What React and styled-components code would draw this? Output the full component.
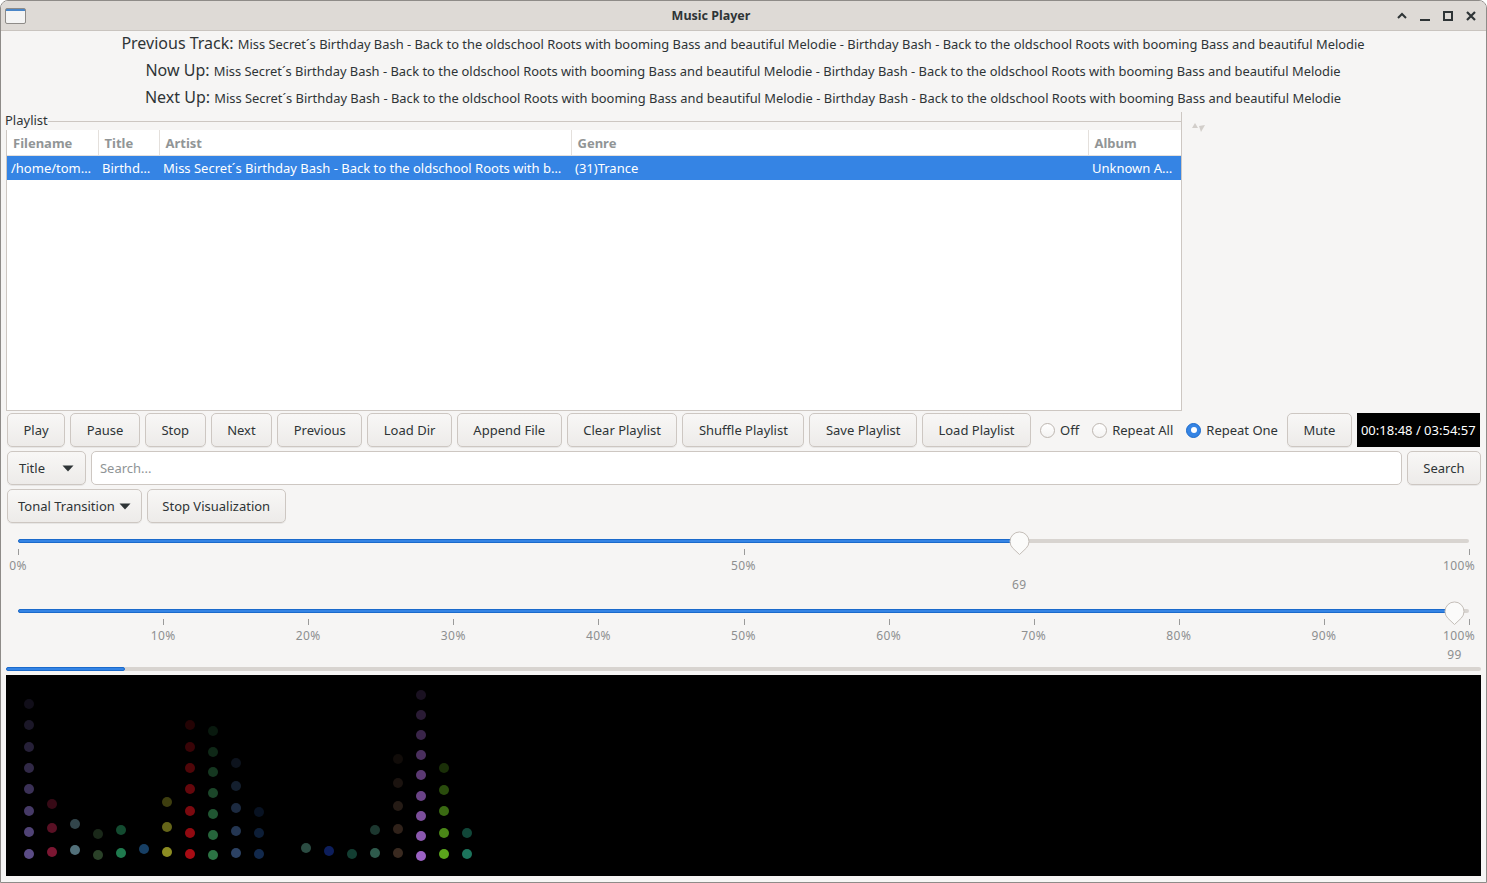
import styled, { createGlobalStyle } from 'styled-components';

const GlobalStyle = createGlobalStyle`
  html, body {
    margin: 0;
    padding: 0;
    background: #ffffff;
  }
  body {
    font-family: "Noto Sans", "Open Sans", sans-serif;
    color: #2e3436;
  }
`;

const Window = styled.div`
  width: 1487px;
  height: 883px;
  box-sizing: border-box;
  display: flex;
  flex-direction: column;
  border: 1px solid #8e8b88;
  border-top-left-radius: 8px;
  border-top-right-radius: 8px;
  background: #f6f5f4;
  overflow: hidden;
`;

const TitleBar = styled.div`
  height: 29px;
  flex-shrink: 0;
  display: flex;
  align-items: center;
  padding: 0 9px 0 4px;
  background: #dedad6;
  border-bottom: 1px solid #c9c4bf;
`;

const WindowIcon = styled.div`
  width: 19px;
  height: 14px;
  border: 1px solid #8e8b88;
  border-radius: 2px;
  background: linear-gradient(#4a86c8 0 2px, #f4f4f4 2px);
`;

const WindowTitle = styled.div`
  flex: 1;
  text-align: center;
  font-size: 12.5px;
  font-weight: 700;
  color: #2e3436;
`;

const WindowControls = styled.div`
  display: flex;
  align-items: center;
  gap: 11px;
  svg { display: block; }
`;

const Content = styled.div`
  flex: 1;
  display: flex;
  flex-direction: column;
  padding: 0 5px 0 4px;
`;

const InfoBlock = styled.div`
  display: flex;
  flex-direction: column;
  align-items: center;
`;

const InfoLine = styled.div`
  height: 27px;
  line-height: 25px;
  font-size: 12.9px;
  white-space: nowrap;
  color: #2e3436;
`;

const InfoLabel = styled.span`
  font-size: 16px;
`;

const Middle = styled.div`
  display: flex;
  height: 299px;
`;

const PlaylistPane = styled.div`
  width: 1176px;
  display: flex;
  flex-direction: column;
  border-right: 1px solid #cdc7c2;
`;

const FrameLabel = styled.div`
  height: 18px;
  display: flex;
  align-items: flex-end;
  font-size: 13px;
  line-height: 17px;
  padding-bottom: 1px;
  box-sizing: border-box;
  color: #2e3436;
  &::after {
    content: "";
    flex: 1;
    height: 1px;
    background: #cdc7c2;
    margin-bottom: 7px;
  }
`;

const TableBox = styled.div`
  flex: 1;
  margin-left: 1px;
  background: #ffffff;
  border-left: 1px solid #cdc7c2;
  border-bottom: 1px solid #cdc7c2;
  overflow: hidden;
`;

const Table = styled.table`
  width: 1175px;
  border-collapse: collapse;
  table-layout: fixed;
  font-size: 13px;
`;

const HeadCell = styled.th`
  height: 25px;
  padding: 0 6px;
  text-align: left;
  font-weight: 700;
  color: #919596;
  border-bottom: 1px solid #e4e0dc;
  border-left: ${p => (p.$first ? 'none' : '1px solid #e4e0dc')};
  white-space: nowrap;
  overflow: hidden;
`;

const Row = styled.tr`
  background: ${p => (p.$selected ? '#3584e4' : '#ffffff')};
  color: ${p => (p.$selected ? '#ffffff' : '#2e3436')};
`;

const Cell = styled.td`
  height: 24px;
  padding: 0 4px;
  white-space: nowrap;
  overflow: hidden;
`;

const SidePane = styled.div`
  flex: 1;
  padding: 10px 0 0 9px;
  svg { display: block; }
`;

const Toolbar = styled.div`
  display: flex;
  align-items: center;
  gap: 5px;
  margin-top: ${p => p.$top || 4}px;
  padding-left: 2px;
`;

const Button = styled.button`
  height: 34px;
  box-sizing: border-box;
  flex-shrink: 0;
  display: inline-flex;
  align-items: center;
  gap: ${p => p.$gap || 0}px;
  padding: 0 ${p => p.$pad || 15.5}px;
  border: 1px solid #cdc7c2;
  border-radius: 5px;
  background: linear-gradient(#f8f7f6, #edebe9);
  box-shadow: 0 1px 0 rgba(0, 0, 0, 0.06);
  font-family: inherit;
  font-size: 13px;
  color: #2e3436;
  white-space: nowrap;
`;

const RadioLabel = styled.label`
  display: inline-flex;
  align-items: center;
  flex-shrink: 0;
  gap: 5px;
  padding: 0 4px;
  font-size: 13px;
  color: #2e3436;
  white-space: nowrap;
`;

const RadioDot = styled.span`
  width: 15px;
  height: 15px;
  border-radius: 50%;
  box-sizing: border-box;
  display: inline-flex;
  align-items: center;
  justify-content: center;
  border: 1px solid ${p => (p.$checked ? '#1b6acb' : '#bdb6b0')};
  background: ${p => (p.$checked ? '#3584e4' : 'linear-gradient(#ffffff, #f4f3f2)')};
  &::after {
    content: "";
    width: 6px;
    height: 6px;
    border-radius: 50%;
    background: ${p => (p.$checked ? '#ffffff' : 'transparent')};
  }
`;

const TimeDisplay = styled.div`
  height: 34px;
  width: 123px;
  flex-shrink: 0;
  display: flex;
  align-items: center;
  justify-content: center;
  background: #000000;
  color: #ffffff;
  font-size: 13px;
  white-space: nowrap;
`;

const SearchEntry = styled.input`
  flex: 1;
  min-width: 0;
  height: 34px;
  box-sizing: border-box;
  padding: 0 8px;
  border: 1px solid #cdc7c2;
  border-radius: 5px;
  background: #ffffff;
  font-family: inherit;
  font-size: 13px;
  color: #2e3436;
  outline: none;
  &::placeholder { color: #8f9496; }
`;

const SliderBlock = styled.div`
  position: relative;
  height: ${p => p.$height}px;
  margin: ${p => p.$top}px 12px 0 13px;
`;

const Track = styled.div`
  position: absolute;
  left: 0;
  right: 0;
  top: 9px;
  height: 4px;
  border-radius: 2px;
  background: #d8d4d0;
`;

const TrackFill = styled.div`
  height: 100%;
  border-radius: 2px;
  box-sizing: border-box;
  background: #3584e4;
  border: 1px solid #1b6acb;
`;

const Handle = styled.svg`
  position: absolute;
  top: 1px;
  transform: translateX(-10px);
`;

const Tick = styled.div`
  position: absolute;
  top: ${p => p.$top}px;
  width: 1px;
  height: 6px;
  background: #9a9a9a;
`;

const TickLabel = styled.div`
  position: absolute;
  top: ${p => p.$top}px;
  transform: ${p => (p.$end ? 'translateX(calc(-50% - 10px))' : 'translateX(-50%)')};
  font-size: 12px;
  letter-spacing: 0.4px;
  color: #8d8f90;
  white-space: nowrap;
`;

const Progress = styled.div`
  height: 4px;
  margin: 7px 0 0 1px;
  border-radius: 2px;
  background: #d8d4d0;
`;

const Visualizer = styled.div`
  height: 201px;
  margin: 4px 0 0 1px;
  background: #000000;
  svg { display: block; }
`;

const trackText =
  'Miss Secret\u00b4s Birthday Bash - Back to the oldschool Roots with booming Bass and beautiful Melodie - Birthday Bash - Back to the oldschool Roots with booming Bass and beautiful Melodie';

const columns = [
  { x: 28, color: '#5b4c86', ys: [854, 832, 811, 789, 768, 747, 725, 704] },
  { x: 51, color: '#7c1632', ys: [852, 828, 804] },
  { x: 74, color: '#52707a', ys: [850, 824] },
  { x: 97, color: '#2a4128', ys: [855, 834] },
  { x: 120, color: '#1f7a4e', ys: [853, 830] },
  { x: 143, color: '#173f64', ys: [849] },
  { x: 166, color: '#8c8c22', ys: [852, 827, 802] },
  { x: 189, color: '#a80c14', ys: [854, 833, 811, 789, 768, 747, 725] },
  { x: 212, color: '#2c7444', ys: [855, 835, 814, 793, 772, 752, 731] },
  { x: 235, color: '#2c4264', ys: [853, 831, 808, 786, 763] },
  { x: 258, color: '#12294c', ys: [854, 833, 812] },
  { x: 305, color: '#2b4c42', ys: [848] },
  { x: 328, color: '#0d1e5c', ys: [851] },
  { x: 351, color: '#133e32', ys: [854] },
  { x: 374, color: '#2e5a4c', ys: [853, 830] },
  { x: 397, color: '#3a2a20', ys: [853, 829, 806, 783, 759] },
  { x: 420, color: '#9b62c4', ys: [856, 836, 816, 796, 775, 755, 735, 715, 695] },
  { x: 443, color: '#5aa51c', ys: [854, 833, 811, 790, 768] },
  { x: 466, color: '#1c745c', ys: [854, 833] },
];

// top of the visualizer area in page coordinates
const VIS_TOP = 675;

const Arrow = () => (
  <svg width="12" height="7" viewBox="0 0 12 7">
    <path d="M0.5 0.5 L11.5 0.5 L6 6.5 Z" fill="#2e3436" />
  </svg>
);

const PinHandle = ({ value }) => (
  <Handle width="21" height="25" viewBox="0 0 21 25" style={{ left: `${value}%` }}>
    <path
      d="M10.5 23.5 L3.8 17.2 A9.5 9.5 0 1 1 17.2 17.2 Z"
      fill="#fbfbfa"
      stroke="#c4beb8"
      strokeWidth="1"
    />
  </Handle>
);

const Slider = ({ value, marks, top, height, labelTop, valueTop, tickTop }) => (
  <SliderBlock $top={top} $height={height}>
    <Track>
      <TrackFill style={{ width: `${value}%` }} />
    </Track>
    {marks.map(m => (
      <Tick key={`t${m}`} $top={tickTop} style={{ left: `${m}%` }} />
    ))}
    {marks.map(m => (
      <TickLabel key={`l${m}`} $top={labelTop} $end={m === 100} style={{ left: `${m}%` }}>
        {m}%
      </TickLabel>
    ))}
    <PinHandle value={value} />
    <TickLabel $top={valueTop} style={{ left: `${value}%` }}>
      {value}
    </TickLabel>
  </SliderBlock>
);

const Radio = ({ label, checked }) => (
  <RadioLabel>
    <RadioDot $checked={checked} />
    {label}
  </RadioLabel>
);

const App = () => {
  const headers = [
    { name: 'Filename', width: 91 },
    { name: 'Title', width: 61 },
    { name: 'Artist', width: 412 },
    { name: 'Genre', width: 517 },
    { name: 'Album', width: 94 },
  ];
  const playButtons = [
    'Play', 'Pause', 'Stop', 'Next', 'Previous', 'Load Dir', 'Append File',
    'Clear Playlist', 'Shuffle Playlist', 'Save Playlist', 'Load Playlist',
  ];

  return (
    <>
      <GlobalStyle />
      <Window>
        <TitleBar>
          <WindowIcon />
          <WindowTitle>Music Player</WindowTitle>
          <WindowControls>
            <svg width="12" height="12" viewBox="0 0 12 12">
              <path d="M2 8 L6 4 L10 8" fill="none" stroke="#2e3436" strokeWidth="2" />
            </svg>
            <svg width="12" height="12" viewBox="0 0 12 12">
              <rect x="1" y="9" width="10" height="2" fill="#2e3436" />
            </svg>
            <svg width="12" height="12" viewBox="0 0 12 12">
              <rect x="2" y="2" width="8" height="8" fill="none" stroke="#2e3436" strokeWidth="2" />
            </svg>
            <svg width="12" height="12" viewBox="0 0 12 12">
              <path d="M2 2 L10 10 M10 2 L2 10" stroke="#2e3436" strokeWidth="2.2" />
            </svg>
          </WindowControls>
        </TitleBar>

        <Content>
          <InfoBlock>
            <InfoLine><InfoLabel>Previous Track: </InfoLabel>{trackText}</InfoLine>
            <InfoLine><InfoLabel>Now Up: </InfoLabel>{trackText}</InfoLine>
            <InfoLine><InfoLabel>Next Up: </InfoLabel>{trackText}</InfoLine>
          </InfoBlock>

          <Middle>
            <PlaylistPane>
              <FrameLabel>Playlist</FrameLabel>
              <TableBox>
                <Table>
                  <colgroup>
                    {headers.map(h => <col key={h.name} style={{ width: h.width }} />)}
                  </colgroup>
                  <thead>
                    <tr>
                      {headers.map((h, i) => (
                        <HeadCell key={h.name} $first={i === 0}>{h.name}</HeadCell>
                      ))}
                    </tr>
                  </thead>
                  <tbody>
                    <Row $selected>
                      <Cell>/home/tom…</Cell>
                      <Cell>Birthd…</Cell>
                      <Cell>Miss Secret´s Birthday Bash - Back to the oldschool Roots with b…</Cell>
                      <Cell>(31)Trance</Cell>
                      <Cell>Unknown A…</Cell>
                    </Row>
                  </tbody>
                </Table>
              </TableBox>
            </PlaylistPane>
            <SidePane>
              <svg width="16" height="12" viewBox="0 0 16 12">
                <path d="M1 6 L7 6 L4 1 Z" fill="#d2ceca" />
                <path d="M8 4 L14 3 L10 10 Z" fill="#d2ceca" />
              </svg>
            </SidePane>
          </Middle>

          <Toolbar $top={2}>
            {playButtons.map(b => (
              <Button key={b}>{b}</Button>
            ))}
            <Radio label="Off" />
            <Radio label="Repeat All" />
            <Radio label="Repeat One" checked />
            <Button>Mute</Button>
            <TimeDisplay>00:18:48 / 03:54:57</TimeDisplay>
          </Toolbar>

          <Toolbar>
            <Button $pad={11} $gap={17}>Title <Arrow /></Button>
            <SearchEntry placeholder="Search..." />
            <Button>Search</Button>
          </Toolbar>

          <Toolbar>
            <Button $pad={10} $gap={4}>Tonal Transition <Arrow /></Button>
            <Button $pad={14.5}>Stop Visualization</Button>
          </Toolbar>

          <Slider
            value={69}
            marks={[0, 50, 100]}
            top={7}
            height={64}
            tickTop={19}
            labelTop={27}
            valueTop={46}
          />
          <Slider
            value={99}
            marks={[10, 20, 30, 40, 50, 60, 70, 80, 90, 100]}
            top={6}
            height={60}
            tickTop={19}
            labelTop={27}
            valueTop={46}
          />

          <Progress>
            <TrackFill style={{ width: '8.1%' }} />
          </Progress>

          <Visualizer>
            <svg width="1476" height="201" viewBox="0 0 1476 201">
              {columns.map(c =>
                c.ys.map((y, i) => (
                  <circle
                    key={`${c.x}-${i}`}
                    cx={c.x - 5}
                    cy={y - VIS_TOP}
                    r="5"
                    fill={c.color}
                    fillOpacity={1 - i / (c.ys.length + 0.6)}
                  />
                ))
              )}
            </svg>
          </Visualizer>
        </Content>
      </Window>
    </>
  );
};

export default App;
